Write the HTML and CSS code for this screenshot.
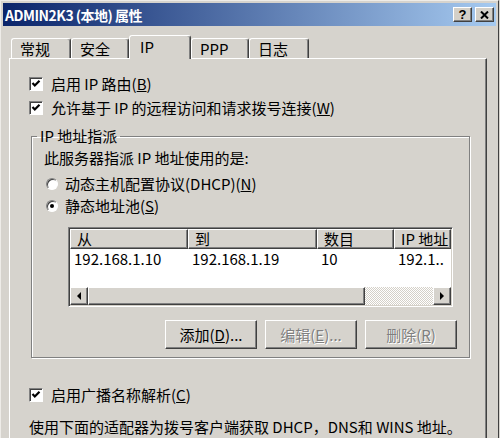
FILE: index.html
```html
<!DOCTYPE html>
<html lang="zh-CN">

<head>
    <meta charset="UTF-8" />
    <meta name="viewport" content="width=device-width, initial-scale=1.0" />
    <title>ADMIN2K3 (本地) 属性</title>
    <link rel="stylesheet" href="styles.css">
</head>

<body>
    <div class="window">
        <div class="titlebar">
            <span class="title">ADMIN2K3 (本地) 属性</span>
            <div class="title-btns">
                <a class="tbtn" href="javascript:;">?</a>
                <a class="tbtn" href="javascript:;">
                    <svg width="9" height="8" viewBox="0 0 9 8">
                        <path d="M1 0.5 L8 7.5 M8 0.5 L1 7.5" stroke="#000" stroke-width="2" />
                    </svg>
                </a>
            </div>
        </div>

        <!-- 选项卡 -->
        <ul class="tabs">
            <li class="tab w60">常规</li>
            <li class="tab w58">安全</li>
            <li class="tab w62 current">IP</li>
            <li class="tab w58">PPP</li>
            <li class="tab w60">日志</li>
        </ul>

        <div class="panel">
            <label class="check-row first">
                <span class="checkbox">
                    <svg width="10" height="10" viewBox="0 0 10 10">
                        <path d="M1.5 4 L3.8 6.5 L8.5 1.8" fill="none" stroke="#000" stroke-width="2.2" />
                    </svg>
                </span>
                启用 IP 路由(<u>B</u>)
            </label>
            <label class="check-row second">
                <span class="checkbox">
                    <svg width="10" height="10" viewBox="0 0 10 10">
                        <path d="M1.5 4 L3.8 6.5 L8.5 1.8" fill="none" stroke="#000" stroke-width="2.2" />
                    </svg>
                </span>
                允许基于 IP 的远程访问和请求拨号连接(<u>W</u>)
            </label>

            <fieldset class="group">
                <legend>IP 地址指派</legend>
                <p class="group-text">此服务器指派 IP 地址使用的是:</p>

                <label class="radio-row r1"><span class="radio"></span>动态主机配置协议(DHCP)(<u>N</u>)</label>
                <label class="radio-row r2"><span class="radio checked"></span>静态地址池(<u>S</u>)</label>

                <div class="listview">
                    <div class="lv-head">
                        <span class="c1">从</span>
                        <span class="c2">到</span>
                        <span class="c3">数目</span>
                        <span class="c4">IP 地址</span>
                    </div>
                    <div class="lv-body">
                        <div class="lv-row">
                            <span class="c1">192.168.1.10</span>
                            <span class="c2">192.168.1.19</span>
                            <span class="c3">10</span>
                            <span class="c4">192.1..</span>
                        </div>
                    </div>
                    <div class="hscroll">
                        <span class="sb-btn"><i class="arrow-left"></i></span>
                        <span class="sb-thumb"></span>
                        <span class="sb-track"></span>
                        <span class="sb-btn"><i class="arrow-right"></i></span>
                    </div>
                </div>

                <div class="btn-row">
                    <a class="btn" href="javascript:;">添加(<u>D</u>)...</a>
                    <a class="btn disabled" href="javascript:;">编辑(<u>E</u>)...</a>
                    <a class="btn disabled" href="javascript:;">删除(<u>R</u>)</a>
                </div>
            </fieldset>

            <label class="check-row third">
                <span class="checkbox">
                    <svg width="10" height="10" viewBox="0 0 10 10">
                        <path d="M1.5 4 L3.8 6.5 L8.5 1.8" fill="none" stroke="#000" stroke-width="2.2" />
                    </svg>
                </span>
                启用广播名称解析(<u>C</u>)
            </label>

            <p class="note">使用下面的适配器为拨号客户端获取 DHCP，DNS和 WINS 地址。</p>
        </div>
    </div>
</body>

</html>
```

FILE: styles.css
```css
* {
    margin: 0;
    padding: 0;
    box-sizing: border-box;
}

ul {
    list-style: none;
}

a {
    color: #000;
    text-decoration: none;
}

body {
    width: 500px;
    height: 438px;
    overflow: hidden;
    background: #d6d3cd;
    font: 15px/18px "Noto Sans CJK SC", sans-serif;
    color: #000;
}

.window {
    width: 499px;
    height: 438px;
    padding: 2px 2px 0 2px;
    border-top: 1px solid #eeece8;
    border-left: 1px solid #eeece8;
    border-right: 1px solid #404040;
}

/*
    标题栏
*/
.titlebar {
    height: 23px;
    display: flex;
    align-items: center;
    justify-content: space-between;
    padding-left: 2px;
    background: linear-gradient(to right, #0a246a, #a6caf0);
}

.title {
    color: #fff;
    font-weight: bold;
    font-size: 14px;
    letter-spacing: -0.5px;
}

.title-btns {
    display: flex;
    gap: 3px;
    margin-right: 2px;
}

.tbtn {
    width: 19px;
    height: 15px;
    display: flex;
    align-items: center;
    justify-content: center;
    background: #d4d0c8;
    border: 1px solid;
    border-color: #fff #404040 #404040 #fff;
    box-shadow: inset -1px -1px 0 #808080;
    font: bold 13px/13px "Liberation Sans", sans-serif;
}

/*
    选项卡
*/
.tabs {
    display: flex;
    align-items: flex-end;
    margin-top: 9px;
    padding-left: 8px;
}

.tab {
    height: 20px;
    display: flex;
    align-items: center;
    padding-left: 8px;
    border: 1px solid;
    border-bottom: none;
    border-color: #fff #404040 transparent #fff;
    border-radius: 3px 3px 0 0;
    box-shadow: inset -1px 0 0 #808080;
}

.tab.current {
    height: 24px;
    margin-bottom: -1px;
    position: relative;
    z-index: 1;
    padding-left: 10px;
    padding-bottom: 2px;
    background: #d6d3cd;
}

.w58 {
    width: 58px;
}

.w60 {
    width: 60px;
}

.w62 {
    width: 62px;
}

.panel {
    width: 478px;
    height: 390px;
    margin-left: 6px;
    border: 1px solid;
    border-color: #fff #404040 #404040 #fff;
    box-shadow: inset -1px 0 0 #808080;
}

/*
    复选框
*/
.check-row {
    display: flex;
    align-items: center;
    height: 18px;
    padding-left: 19px;
}

.check-row.first {
    margin-top: 16px;
}

.check-row.second {
    margin-top: 6px;
}

.check-row.third {
    margin-top: 28px;
}

.checkbox {
    width: 14px;
    height: 14px;
    margin-right: 8px;
    display: flex;
    align-items: center;
    justify-content: center;
    background: #fff;
    border: 1px solid;
    border-color: #808080 #fff #fff #808080;
    box-shadow: inset 1px 1px 0 #404040;
}

/*
    分组框
*/
.group {
    width: 439px;
    margin: 10px 0 0 21px;
    padding: 0 12px 8px 0;
    border: 1px solid #808080;
    box-shadow: inset 1px 1px 0 #fff, 1px 1px 0 #fff;
}

.group legend {
    margin-left: 5px;
    padding: 0 3px;
}

.group-text {
    margin: 4px 0 0 12px;
}

.radio-row {
    display: flex;
    align-items: center;
    height: 18px;
    padding-left: 14px;
}

.radio-row.r1 {
    margin-top: 8px;
}

.radio-row.r2 {
    margin-top: 4px;
}

.radio {
    width: 12px;
    height: 12px;
    margin-right: 7px;
    border-radius: 50%;
    background: #fff;
    border: 1px solid;
    border-color: #808080 #fff #fff #808080;
    box-shadow: inset 1px 1px 0 #404040;
    display: flex;
    align-items: center;
    justify-content: center;
}

.radio.checked::after {
    content: "";
    width: 4px;
    height: 4px;
    border-radius: 50%;
    background: #000;
}

/*
    列表
*/
.listview {
    width: 385px;
    height: 80px;
    margin: 12px 0 0 36px;
    display: flex;
    flex-direction: column;
    background: #fff;
    border: 1px solid;
    border-color: #808080 #fff #fff #808080;
    box-shadow: inset 1px 1px 0 #404040, inset -1px -1px 0 #d4d0c8;
    padding: 1px;
}

.lv-head,
.lv-row {
    display: flex;
}

.lv-head span {
    height: 20px;
    display: flex;
    align-items: center;
    padding-left: 6px;
    background: #d6d3cd;
    border: 1px solid;
    border-color: #fff #404040 #404040 #fff;
    box-shadow: inset -1px -1px 0 #808080;
}

.lv-body {
    flex: 1;
}

.lv-row span {
    height: 20px;
    display: flex;
    align-items: center;
    padding-left: 4px;
}

.c1 {
    width: 118px;
}

.c2 {
    width: 129px;
}

.c3 {
    width: 77px;
}

.c4 {
    width: 57px;
}

.hscroll {
    height: 18px;
    display: flex;
}

.sb-btn {
    width: 18px;
    display: flex;
    align-items: center;
    justify-content: center;
    background: #d6d3cd;
    border: 1px solid;
    border-color: #fff #404040 #404040 #fff;
    box-shadow: inset -1px -1px 0 #808080;
}

.sb-thumb {
    width: 277px;
    background: #d6d3cd;
    border: 1px solid;
    border-color: #fff #404040 #404040 #fff;
    box-shadow: inset -1px -1px 0 #808080;
}

.sb-track {
    flex: 1;
    background: repeating-conic-gradient(#fff 0 25%, #d4d0c8 0 50%) 0 0 / 2px 2px;
}

.arrow-left {
    border-top: 4px solid transparent;
    border-bottom: 4px solid transparent;
    border-right: 4px solid #000;
}

.arrow-right {
    border-top: 4px solid transparent;
    border-bottom: 4px solid transparent;
    border-left: 4px solid #000;
}

/*
    按钮
*/
.btn-row {
    display: flex;
    justify-content: flex-end;
    gap: 8px;
    margin-top: 13px;
}

.btn {
    width: 92px;
    height: 29px;
    display: flex;
    align-items: center;
    justify-content: center;
    background: #d6d3cd;
    border: 1px solid;
    border-color: #fff #404040 #404040 #fff;
    box-shadow: inset -1px -1px 0 #808080;
}

.btn.disabled {
    color: #808080;
    text-shadow: 1px 1px 0 #fff;
}

.note {
    margin: 14px 0 0 19px;
}
```
